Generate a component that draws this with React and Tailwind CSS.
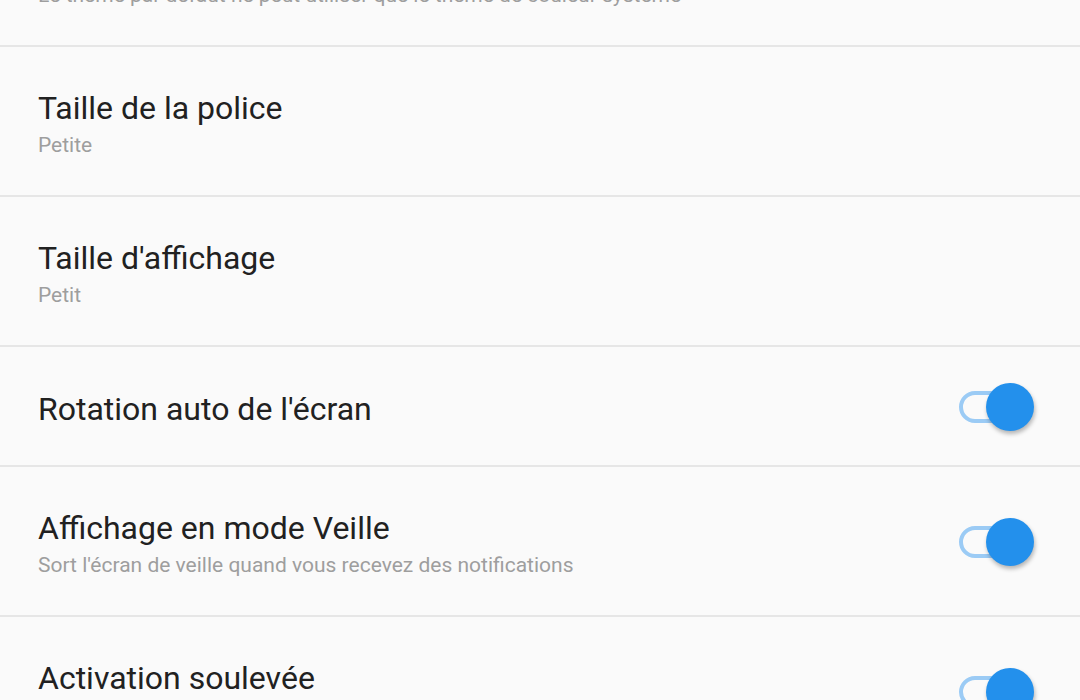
import React from "react";

const rows = [
  {
    title: "Thème",
    subtitle: "Le thème par défaut ne peut utiliser que le thème de couleur système",
    first: true,
  },
  { title: "Taille de la police", subtitle: "Petite" },
  { title: "Taille d'affichage", subtitle: "Petit" },
  { title: "Rotation auto de l'écran", toggle: true },
  {
    title: "Affichage en mode Veille",
    subtitle: "Sort l'écran de veille quand vous recevez des notifications",
    toggle: true,
  },
  {
    title: "Activation soulevée",
    subtitle: "Allume l'écran quand vous soulevez l'appareil",
    toggle: true,
  },
];

const Toggle = () => (
  <div className="relative w-[75px] h-[48px] shrink-0 -mt-[5px]">
    <div className="absolute left-0 top-[8px] w-[70px] h-[32px] rounded-full border-4 border-[#9bcbf5]" />
    <div className="absolute right-0 top-0 w-[48px] h-[48px] rounded-full bg-[#2390ec] shadow-[1px_3px_4px_rgba(0,0,0,0.28)]" />
  </div>
);

const SettingRow = ({ title, subtitle, toggle, first }) => {
  const height = subtitle ? "h-[150px]" : "h-[120px]";
  return (
    <div
      className={`${height} ${first ? "-mt-[103px]" : ""} shrink-0 flex items-center justify-between pl-[38px] pr-[46px] pt-[6px] border-b-2 border-[#e6e6e6]`}
    >
      <div className="flex flex-col">
        <span className="text-[32px] leading-[42px] text-[#212121]">{title}</span>
        {subtitle && (
          <span className="text-[21px] leading-[32px] text-[#9e9e9e]">{subtitle}</span>
        )}
      </div>
      {toggle && <Toggle />}
    </div>
  );
};

export default function App() {
  return (
    <div
      className="w-[1080px] h-[700px] overflow-hidden bg-[#fafafa] flex flex-col"
      style={{ fontFamily: "Roboto, 'Noto Sans', sans-serif" }}
    >
      {rows.map((r) => (
        <SettingRow key={r.title} {...r} />
      ))}
    </div>
  );
}
